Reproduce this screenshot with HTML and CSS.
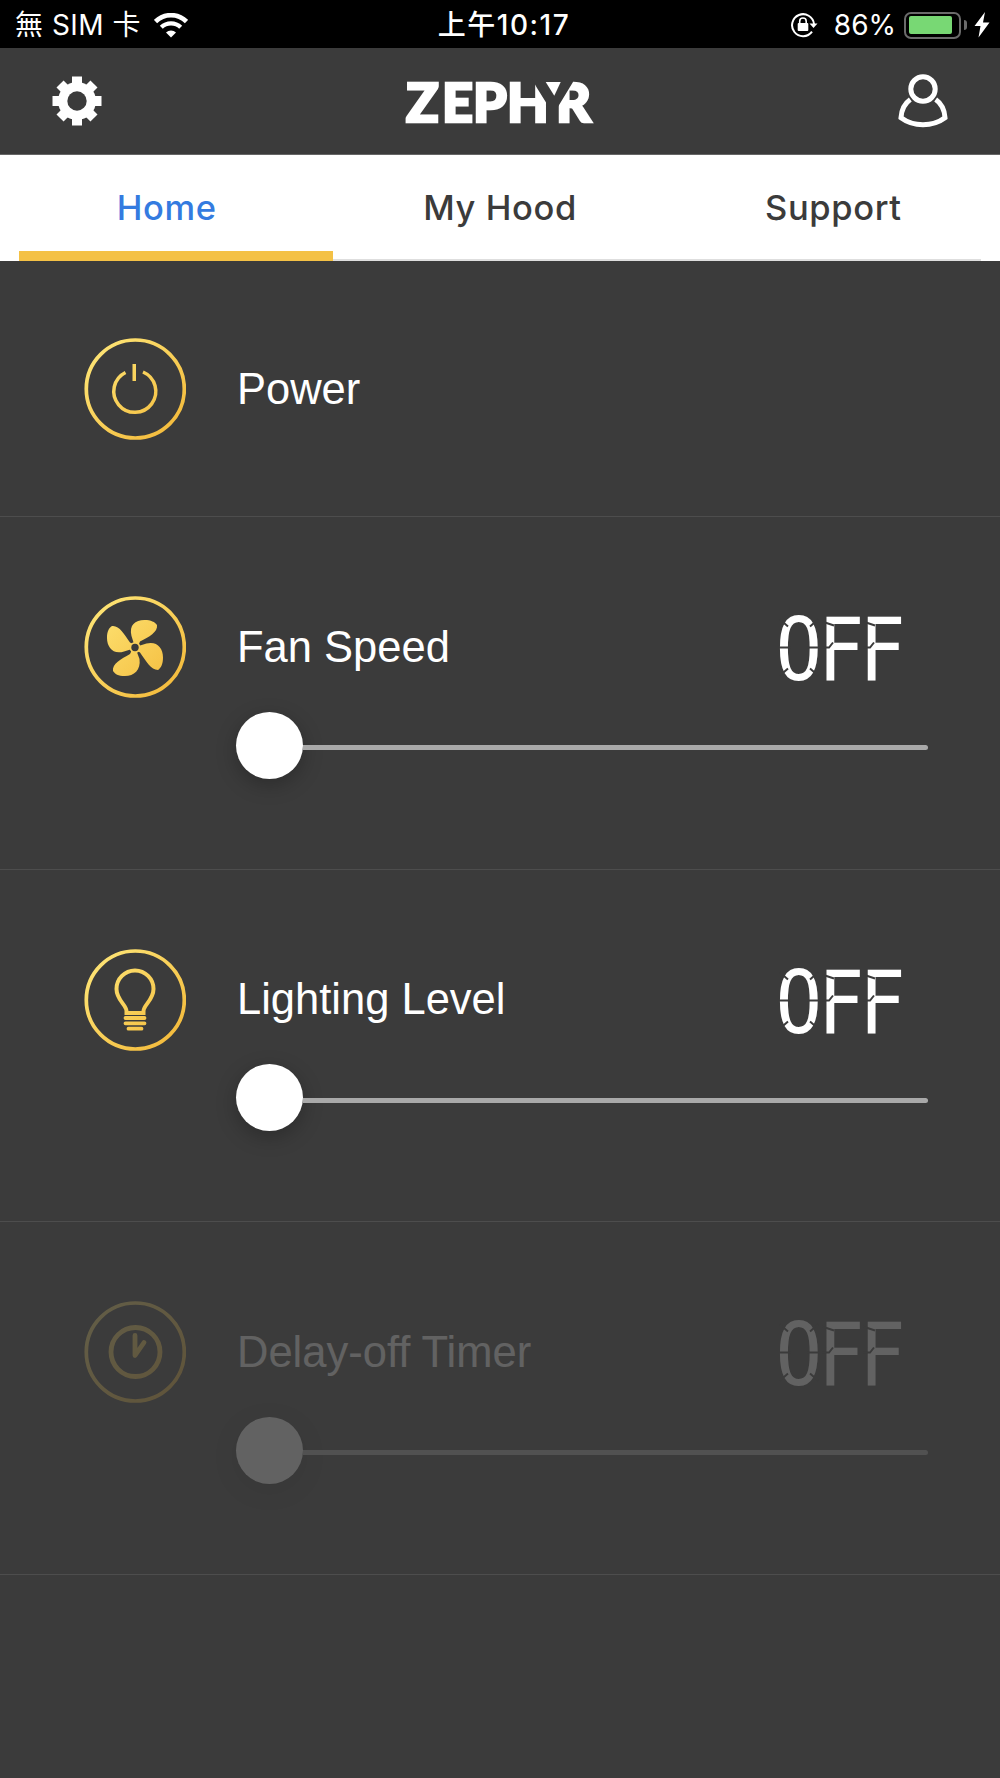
FILE: index.html
```html
<!DOCTYPE html>
<html lang="en">
<head>
  <meta charset="UTF-8">
  <title>Zephyr Connect</title>
  <link rel="stylesheet" href="styles.css">
</head>
<body>

  <!-- shared icon gradient -->
  <svg class="defs" width="0" height="0">
    <defs>
      <linearGradient id="gold" gradientUnits="userSpaceOnUse" x1="15" y1="15" x2="87" y2="87">
        <stop offset="0" stop-color="#fde272"/>
        <stop offset="1" stop-color="#f4bd3f"/>
      </linearGradient>
    </defs>
  </svg>

  <div class="status-bar">
    <div class="status-left">
      <span class="carrier">無 SIM 卡</span>
      <svg class="wifi" width="34" height="25" viewBox="0 0 34 25">
        <path d="M1.5 8.5A22 22 0 0 1 32.5 8.5" fill="none" stroke="#fff" stroke-width="4.6"/>
        <path d="M7.3 14.3A14 14 0 0 1 26.7 14.3" fill="none" stroke="#fff" stroke-width="4.3"/>
        <path d="M17 24.5l-5-5a7.2 7.2 0 0 1 10 0z" fill="#fff"/>
      </svg>
    </div>
    <span class="time">上午10:17</span>
    <div class="status-right">
      <svg class="lock" width="28" height="26" viewBox="0 0 28 26">
        <path d="M22 19.6A11 11 0 1 1 24 12" fill="none" stroke="#fff" stroke-width="2"/>
        <path d="M19.5 11.5h8L23.5 16z" fill="#fff"/>
        <rect x="7.7" y="11" width="10.6" height="8" rx="1" fill="#fff"/>
        <path d="M9.7 12V9.3a3.2 3.2 0 0 1 6.5 0V12" fill="none" stroke="#fff" stroke-width="1.6"/>
      </svg>
      <span class="percent">86%</span>
      <div class="battery"><div class="battery-level"></div></div>
      <div class="battery-cap"></div>
      <svg class="bolt" width="16" height="26" viewBox="0 0 16 26">
        <path d="M11 0L.5 14h6L4.5 25.5 15.5 10.5H9z" fill="#fff"/>
      </svg>
    </div>
  </div>

  <header class="header">
    <svg class="gear" width="50" height="50" viewBox="-25 -25 50 50">
      <g fill="#fff">
        <rect x="-5" y="-24.5" width="10" height="49"/>
        <rect x="-24.5" y="-5" width="49" height="10"/>
        <rect x="-5" y="-24" width="10" height="48" transform="rotate(45)"/>
        <rect x="-5" y="-24" width="10" height="48" transform="rotate(-45)"/>
        <circle r="19"/>
      </g>
      <circle r="9.7" fill="#3b3b3b"/>
    </svg>
    <svg class="logo" width="190" height="64" viewBox="0 -8 190 64">
      <text x="1 37 68 102 131 151" y="44.7">ZEPH<tspan class="dark">Y</tspan>R</text>
      <!-- the gap between the last letters, with its wedge -->
      <path d="M127 2L131.7 10.5L143.7 29.7V48H153V29.7L168 5V2Z" fill="#3b3b3b"/>
      <path d="M140.7 5H155.7L149.3 18.7Z" fill="#fff"/>
    </svg>
    <svg class="user" width="50" height="56" viewBox="0 0 50 56" fill="none" stroke="#fff" stroke-width="5">
      <circle cx="25" cy="16" r="12.2"/>
      <path d="M12.3 26.5C6.5 30.5 3.5 37 3 44.7C15.5 54 34.5 54 47 44.7C46.5 37 43.5 30.5 37.7 26.5"/>
    </svg>
  </header>

  <nav class="tabs">
    <a class="tab active">Home</a>
    <a class="tab">My Hood</a>
    <a class="tab">Support</a>
  </nav>

  <main>
    <section class="row power">
      <svg class="icon" width="102" height="102" viewBox="0 0 102 102" fill="none" stroke="url(#gold)">
        <circle cx="51.3" cy="51" r="49" stroke-width="3.7"/>
        <path d="M41.5 34.5A21 21 0 1 0 59 34" stroke-width="3.5"/>
        <rect x="48.5" y="26" width="3.5" height="17" fill="url(#gold)" stroke="none"/>
      </svg>
      <div class="content"><span class="label">Power</span></div>
    </section>

    <section class="row">
      <svg class="icon" width="102" height="102" viewBox="0 0 102 102">
        <circle cx="51.3" cy="51" r="49" stroke-width="3.7" fill="none" stroke="url(#gold)"/>
        <g fill="url(#gold)">
          <path d="M50 48L47.5 40C45 29 51 24 60.5 24C67 24 71 26 73 29C74 36 65 41 56 45.5L54.5 49Z"/>
          <path d="M54.5 50L62.5 47.5C73 45 79 52 79 61.5C79 68 77 72 74 74C67 74 62 65 56 56.5L53.5 55Z"/>
          <path d="M52.5 55L55.5 63C57 74 50 80 41 80C34 80 31 78 29 75C28 68 37 63 46 58L48 54Z"/>
          <path d="M48 53L40 55.5C29 59 23 51 23 42C23 35 25 32 28 30C35 29 40 38 46 46.5L49 48Z"/>
          <circle cx="51" cy="51.5" r="5.5"/>
        </g>
        <circle cx="51" cy="51.5" r="3.7" fill="#3b3b3b"/>
      </svg>
      <div class="content">
        <div class="line">
          <span class="label">Fan Speed</span>
          <svg class="readout" width="160" height="100" viewBox="-11 -16.5 160 100">
            <text transform="scale(.89 1)" x="-4 43.5 90" y="66">OFF</text>
            <path class="cuts" d="M0 34h12M28 34h12M1 6l8 7M31 13l8-7M1 62l8-7M31 55l8 7M43 8l12 4M84 8l12 4M43 34h7l4-5M84 34h7l4-5"/>
          </svg>
        </div>
        <div class="slider"><div class="knob"></div><div class="track"></div></div>
      </div>
    </section>

    <section class="row">
      <svg class="icon" width="102" height="102" viewBox="0 0 102 102" fill="none" stroke="url(#gold)">
        <circle cx="51.3" cy="51" r="49" stroke-width="3.7"/>
        <path d="M42.5 64V62C42.5 56 32.5 51 32.5 40A18.5 18.5 0 0 1 69.500 40C69.500 51 59.500 56 59.500 62V64Z" stroke-width="4"/>
        <path d="M41.500 69H60.500M41.500 74.300H60.500M44.500 79.700H57.500" stroke-width="3.800" stroke-linecap="round"/>
      </svg>
      <div class="content">
        <div class="line">
          <span class="label">Lighting Level</span>
          <svg class="readout" width="160" height="100" viewBox="-11 -16.5 160 100">
            <text transform="scale(.89 1)" x="-4 43.5 90" y="66">OFF</text>
            <path class="cuts" d="M0 34h12M28 34h12M1 6l8 7M31 13l8-7M1 62l8-7M31 55l8 7M43 8l12 4M84 8l12 4M43 34h7l4-5M84 34h7l4-5"/>
          </svg>
        </div>
        <div class="slider"><div class="knob"></div><div class="track"></div></div>
      </div>
    </section>

    <section class="row disabled">
      <svg class="icon" width="102" height="102" viewBox="0 0 102 102" fill="none" stroke="url(#gold)">
        <circle cx="51.3" cy="51" r="49" stroke-width="3.7"/>
        <circle cx="51.5" cy="51" r="24.5" stroke-width="4.8"/>
        <path d="M51 34.5V54.5L60 41.5" stroke-width="4.8" stroke-linecap="round" stroke-linejoin="round"/>
      </svg>
      <div class="content">
        <div class="line">
          <span class="label">Delay-off Timer</span>
          <svg class="readout" width="160" height="100" viewBox="-11 -16.5 160 100">
            <text transform="scale(.89 1)" x="-4 43.5 90" y="66">OFF</text>
            <path class="cuts" d="M0 34h12M28 34h12M1 6l8 7M31 13l8-7M1 62l8-7M31 55l8 7M43 8l12 4M84 8l12 4M43 34h7l4-5M84 34h7l4-5"/>
          </svg>
        </div>
        <div class="slider"><div class="knob"></div><div class="track"></div></div>
      </div>
    </section>
  </main>

</body>
</html>
```
FILE: styles.css
```css
* {
  box-sizing: border-box;
}
body {
  margin: 0;
  min-height: 1778px;
  background-color: #3b3b3b;
  color: #fff;
  font-family: "Liberation Sans", Arial, sans-serif;
}
svg {
  display: block;
  flex: none;
}
.defs {
  height: 0;
}

/* status bar */
.status-bar {
  display: grid;
  grid-template-columns: 1fr auto 1fr;
  align-items: center;
  height: 48px;
  padding: 2px 10px 0 15px;
  background-color: #000;
  font-family: Inter, "Noto Sans CJK TC", sans-serif;
  font-size: 28px;
  line-height: 46px;
  white-space: nowrap;
}
.status-left, .status-right {
  display: flex;
  align-items: center;
}
.status-right {
  justify-content: flex-end;
}
.carrier {
  letter-spacing: .5px;
}
.wifi {
  margin-left: 13px;
}
.time {
  font-weight: 500;
  letter-spacing: 1.5px;
  padding-left: 3px;
}
.percent {
  margin: 0 8px 0 16px;
}
.battery {
  width: 57px;
  height: 27px;
  padding: 2.5px 3px;
  border: 2px solid #6b6b6b;
  border-radius: 7px;
}
.battery-level {
  width: 43px;
  height: 18px;
  border-radius: 2px;
  background-color: #78d874;
}
.battery-cap {
  width: 3px;
  height: 10px;
  margin: 0 7px 0 3px;
  border-radius: 0 3px 3px 0;
  background-color: #6b6b6b;
}

/* header */
.header {
  display: flex;
  align-items: center;
  justify-content: space-between;
  height: 107px;
  padding: 0 52px;
  border-bottom: 1px solid #666;
}
.logo text {
  fill: #fff;
  stroke: #fff;
  stroke-width: 2.6px;
  font-family: Lato, sans-serif;
  font-weight: 900;
  font-size: 54px;
}
.logo .dark {
  fill: #3b3b3b;
  stroke: none;
}

/* tabs */
.tabs {
  display: flex;
  height: 106px;
  background-color: #fff;
}
.tab {
  position: relative;
  flex: 1;
  color: #3b3b3b;
  font-family: Inter, sans-serif;
  font-size: 34.5px;
  font-weight: 450;
  letter-spacing: .6px;
  line-height: 106px;
  text-align: center;
}
.tab::after {
  content: "";
  position: absolute;
  left: 0;
  right: 0;
  bottom: 0;
  height: 2px;
  background-color: #dedede;
}
.tab:first-child::after {
  left: 19px;
}
.tab:last-child::after {
  right: 19px;
}
.tab.active {
  color: #347be0;
}
.tab.active::after {
  height: 10px;
  background-color: #f4c145;
}

/* rows */
.row {
  display: flex;
  height: 352.7px;
  padding: 79px 72px 0 84px;
  border-bottom: 1px solid #4d4d4d;
}
.row.power {
  height: 256px;
  padding-top: 77px;
}
.content {
  flex: 1;
  margin-left: 51px;
}
.line {
  display: flex;
  justify-content: space-between;
  align-items: center;
  height: 102px;
}
.label {
  font-size: 43.5px;
  line-height: 103px;
}
.readout text {
  fill: #fff;
  font-family: "DejaVu Sans Mono", monospace;
  font-size: 87px;
}
.cuts {
  fill: none;
  stroke: #3b3b3b;
  stroke-width: 2;
}
.slider {
  display: flex;
  align-items: center;
  height: 67px;
  margin: 13.5px 0 0 -1px;
}
.knob {
  width: 67px;
  height: 67px;
  border-radius: 50%;
  background-color: #fff;
  box-shadow: 0 6px 20px rgba(0, 0, 0, .25);
}
.track {
  flex: 1;
  height: 5px;
  margin-top: 5px;
  border-radius: 0 3px 3px 0;
  background-color: #a9a9a9;
}
.disabled .icon, .disabled .line, .disabled .slider {
  opacity: .2;
}
```
